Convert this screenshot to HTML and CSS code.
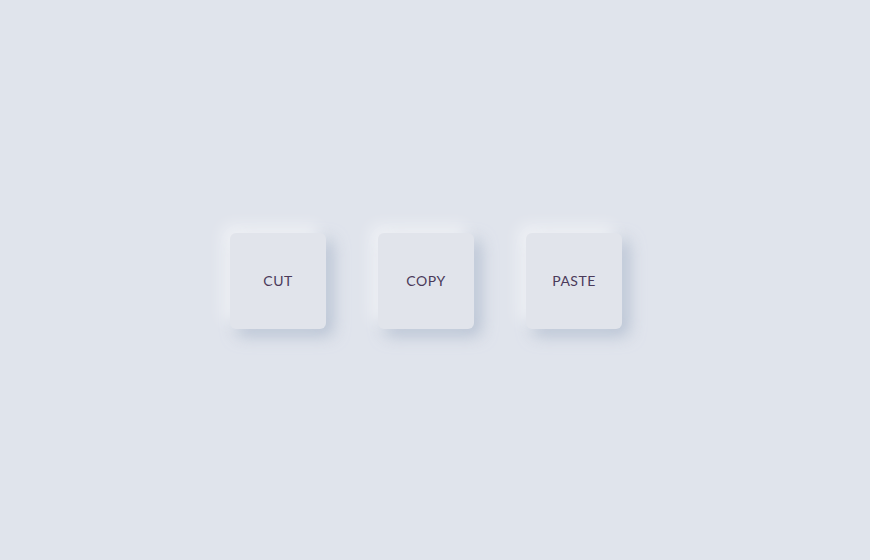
FILE: index.html
```html
<!DOCTYPE html>
<html>
<head>
<meta charset="utf-8">
<link rel="stylesheet" href="styles.css">
</head>
<body>
<div class="stage">
  <div class="row">
    <button class="key">CUT</button>
    <button class="key">COPY</button>
    <button class="key">PASTE</button>
  </div>
</div>
</body>
</html>
```
FILE: styles.css
```css
html, body {
  margin: 0;
  padding: 0;
  background: #e0e4ec;
}
.stage {
  width: 870px;
  height: 560px;
  display: flex;
  align-items: center;
  justify-content: center;
  padding-right: 18px;
  padding-top: 2px;
  box-sizing: border-box;
}
.row {
  display: flex;
  gap: 52px;
}
.key {
  width: 96px;
  height: 96px;
  border: none;
  border-radius: 6px;
  background: #e1e4eb;
  font-family: Lato, "Open Sans", sans-serif;
  font-size: 14px;
  letter-spacing: 0.5px;
  color: #4a3a5a;
  padding: 0 0 2px 0;
  box-shadow: -7px -7px 16px rgba(255,255,255,0.55), 7px 7px 16px rgba(163,177,198,0.65);
}
```
